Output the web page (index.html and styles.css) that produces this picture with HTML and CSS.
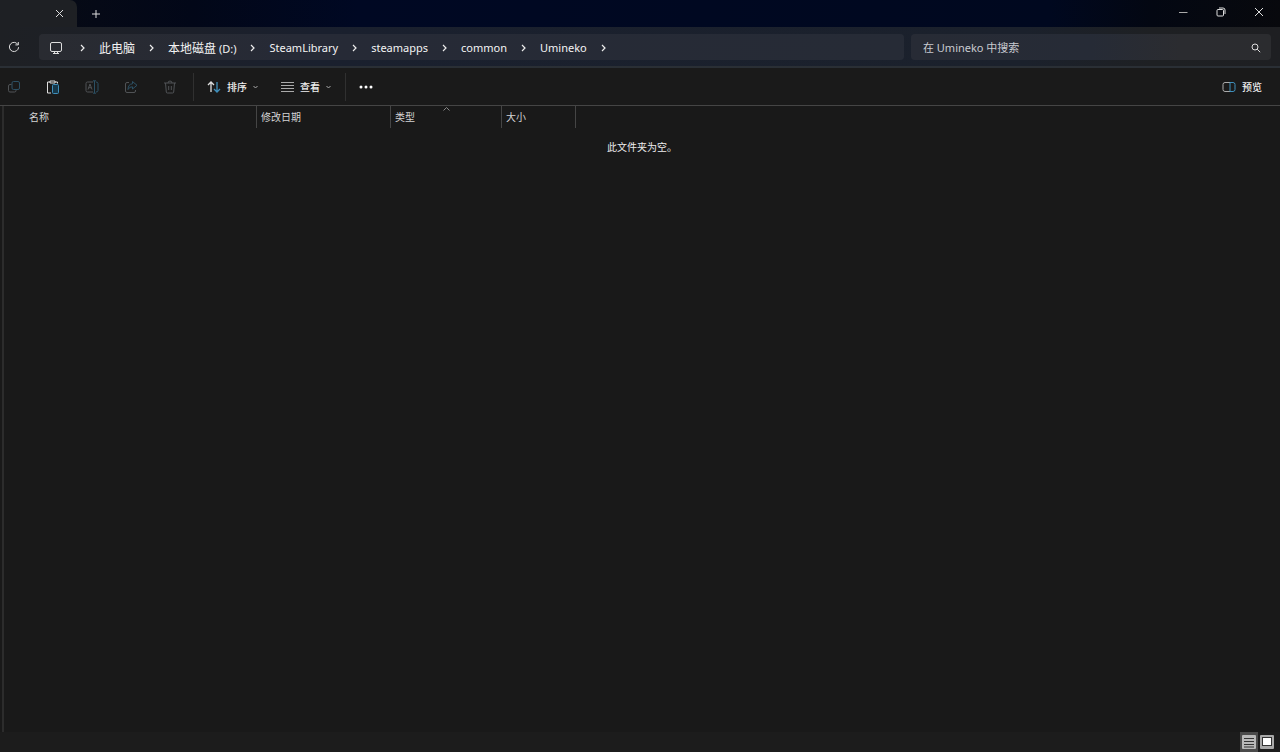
FILE: index.html
```html
<!DOCTYPE html>
<html lang="zh-CN">
<head>
<meta charset="utf-8">
<meta name="viewport" content="width=device-width, initial-scale=1">
<title>Umineko</title>
<link rel="stylesheet" href="styles.css">
</head>
<body>
<div class="window">
  <header class="titlebar">
    <div class="tab">
      <button class="btn" type="button" aria-label="关闭标签页"><svg class="icon" width="9" height="9" viewBox="0 0 9 9"><path d="M1 1l7 7M8 1l-7 7"/></svg></button>
    </div>
    <button class="btn new-tab" type="button" aria-label="新建标签页"><svg class="icon" width="10" height="10" viewBox="0 0 10 10"><path d="M5 1v8M1 5h8"/></svg></button>
    <div class="caption">
      <button class="btn caption-btn" type="button" aria-label="最小化"><svg class="icon dim" width="10" height="10" viewBox="0 0 10 10"><path d="M1 5.500h8.500"/></svg></button>
      <button class="btn caption-btn" type="button" aria-label="还原"><svg class="icon" width="10" height="10" viewBox="0 0 10 10"><rect x="1" y="2.500" width="6.500" height="6.500" rx="1"/><path d="M3 1h4a2 2 0 0 1 2 2v4"/></svg></button>
      <button class="btn caption-btn" type="button" aria-label="关闭"><svg class="icon" width="10" height="10" viewBox="0 0 10 10"><path d="M1 1l8 8M9 1L1 9"/></svg></button>
    </div>
  </header>

  <div class="address-row">
    <button class="btn refresh" type="button" aria-label="刷新"><svg class="icon" width="12" height="12" viewBox="0 0 12 12"><path d="M9.900 3.500A4.600 4.600 0 1 0 10.600 6.200M10.300 1v2.900H7.400"/></svg></button>
    <nav class="path" aria-label="地址">
      <svg class="icon monitor" width="14" height="14" viewBox="0 0 14 14"><rect x="1.500" y="1.500" width="11" height="9" rx="1.500"/><path d="M5.500 10.500v2M8.500 10.500v2M4 12.500h6"/></svg>
      <svg class="chev" viewBox="0 0 33 10"><path d="M15 2l3 3-3 3"/></svg>
      <a href="#" class="zh">此电脑</a>
      <svg class="chev" viewBox="0 0 33 10"><path d="M15 2l3 3-3 3"/></svg>
      <a href="#"><span class="zh">本地磁盘</span> (D:)</a>
      <svg class="chev" viewBox="0 0 33 10"><path d="M15 2l3 3-3 3"/></svg>
      <a href="#">SteamLibrary</a>
      <svg class="chev" viewBox="0 0 33 10"><path d="M15 2l3 3-3 3"/></svg>
      <a href="#">steamapps</a>
      <svg class="chev" viewBox="0 0 33 10"><path d="M15 2l3 3-3 3"/></svg>
      <a href="#">common</a>
      <svg class="chev" viewBox="0 0 33 10"><path d="M15 2l3 3-3 3"/></svg>
      <a href="#">Umineko</a>
      <svg class="chev" viewBox="0 0 33 10"><path d="M15 2l3 3-3 3"/></svg>
    </nav>
    <form class="search">
      <input class="search-input" type="text" aria-label="搜索" placeholder="在 Umineko 中搜索">
      <button class="btn" type="button" aria-label="开始搜索"><svg class="icon" width="10" height="10" viewBox="0 0 10 10"><circle cx="4" cy="4" r="3"/><path d="M6.200 6.200L9.200 9.200"/></svg></button>
    </form>
  </div>

  <div class="toolbar">
    <div class="tools">
      <button class="btn" type="button" aria-label="复制" disabled><svg class="icon off" width="14" height="14" viewBox="0 0 14 14"><rect class="off-blue" x="5" y="1.500" width="7.500" height="8" rx="1.500"/><path d="M4.500 4.500H3A1.500 1.500 0 0 0 1.500 6v4.500A1.500 1.500 0 0 0 3 12h4.500A1.500 1.500 0 0 0 9 10.500V10"/></svg></button>
      <button class="btn" type="button" aria-label="粘贴"><svg class="icon paste" width="14" height="14" viewBox="0 0 14 14"><path d="M4 2H1.500v11H5M9 2h2.500v1.500M4 1h5v2H4z"/><rect class="blue" x="6.500" y="4.500" width="6" height="9" rx="1"/></svg></button>
      <button class="btn" type="button" aria-label="重命名" disabled><svg class="icon off" width="14" height="14" viewBox="0 0 14 14"><path d="M8 2H2.500Q1 2 1 3.500v7Q1 12 2.500 12H8M3 9.500l2-5.500 2 5.500M3.700 7.700h2.600"/><path class="off-blue" d="M9.500 1v12M8 .8h3M8 13.200h3M11 2q2 0 2 1.500v7Q13 12 11 12"/></svg></button>
      <button class="btn" type="button" aria-label="共享" disabled><svg class="icon off" width="14" height="14" viewBox="0 0 14 14"><path d="M5 2.500H3A1.500 1.500 0 0 0 1.500 4v7A1.500 1.500 0 0 0 3 12.500h7a1.500 1.500 0 0 0 1.500-1.500v-1"/><path class="off-blue" d="M8.500 1.500L13 5.300 8.500 9V6.800Q5.500 6.500 4 9.500 4.200 4 8.500 3.800z"/></svg></button>
      <button class="btn" type="button" aria-label="删除" disabled><svg class="icon off" width="14" height="14" viewBox="0 0 14 14"><path d="M1 3h12M5 3a2 2 0 0 1 4 0M2.500 3l.8 9q.1 1 1 1h5.400q.9 0 1-1l.8-9M5.700 6v4M8.300 6v4"/></svg></button>
    </div>
    <div class="menus">
      <button class="btn menu-btn" type="button"><svg class="icon sort-icon" width="14" height="12" viewBox="0 0 14 12"><path d="M4 11V1M1 4l3-3 3 3"/><path class="blue" d="M10 1v10M7 8l3 3 3-3"/></svg><span>排序</span><svg class="icon dim" width="5" height="4" viewBox="0 0 5 4"><path d="M.5 1l2 2 2-2"/></svg></button>
      <button class="btn menu-btn" type="button"><svg class="icon dim" width="13" height="10" viewBox="0 0 13 10"><path d="M0 .5h13M0 3.500h13M0 6.500h13M0 9.500h13"/></svg><span>查看</span><svg class="icon dim" width="5" height="4" viewBox="0 0 5 4"><path d="M.5 1l2 2 2-2"/></svg></button>
    </div>
    <button class="btn more" type="button" aria-label="更多"><svg width="14" height="4" viewBox="0 0 14 4" fill="#fff"><circle cx="2" cy="2" r="1.500"/><circle cx="7" cy="2" r="1.500"/><circle cx="12" cy="2" r="1.500"/></svg></button>
    <button class="btn menu-btn preview" type="button"><svg class="icon" width="14" height="12" viewBox="0 0 14 12"><path class="dim" d="M8 1.500H3A2 2 0 0 0 1 3.500v5a2 2 0 0 0 2 2h5"/><path class="blue" d="M8 1.500h3a2 2 0 0 1 2 2v5a2 2 0 0 1-2 2H8z"/></svg><span>预览</span></button>
  </div>

  <main class="files">
    <table class="columns">
      <thead>
        <tr>
          <th class="col-name" scope="col">名称</th>
          <th class="col-date" scope="col">修改日期</th>
          <th class="col-type" scope="col" aria-sort="ascending">类型<svg class="sort" width="7" height="4" viewBox="0 0 7 4"><path d="M.5 3.500l3-3 3 3"/></svg></th>
          <th class="col-size" scope="col">大小</th>
        </tr>
      </thead>
    </table>
    <p class="empty">此文件夹为空。</p>
  </main>

  <footer class="status">
    <button class="btn view active" type="button" aria-label="详细信息"><svg width="14" height="14" viewBox="0 0 14 14"><rect width="14" height="14" rx="1" fill="#b8b8b8"/><path d="M2 3.500h10M2 6.500h10M2 9.500h10M2 12h10" stroke="#333"/></svg></button>
    <button class="btn view" type="button" aria-label="大缩略图"><svg width="14" height="14" viewBox="0 0 14 14"><rect width="14" height="14" rx="1" fill="#a8a8a8"/><rect x="2.500" y="2.500" width="9" height="8" fill="#fff" stroke="#333"/></svg></button>
  </footer>
</div>
</body>
</html>
```
FILE: styles.css
```css
* { box-sizing: border-box; }

body {
  margin: 0;
  background: #191919;
  color: #f0f0f0;
  font: 11px/16px "Noto Sans", "Noto Sans CJK SC", sans-serif;
}

.window {
  min-height: 100vh;
  display: flex;
  flex-direction: column;
}

.btn {
  display: flex;
  align-items: center;
  justify-content: center;
  padding: 0;
  border: 0;
  background: none;
  color: inherit;
  font: inherit;
}

.icon { fill: none; stroke: #dedede; flex: none; }
.dim { stroke: #aaa; }
.blue { stroke: #3f8fbb; }
.off { stroke: #505356; }
.off-blue { stroke: #2c5064; }
.paste .blue { fill: #17384a; }
.sort-icon { stroke-width: 1.3; }

.titlebar {
  height: 27px;
  display: flex;
  align-items: stretch;
  background: linear-gradient(90deg, #080b14 0%, #020718 15%, #000823 28%, #00081f 82%, #030712 90%, #08090d 100%);
}

.tab {
  width: 77px;
  padding-right: 13px;
  display: flex;
  justify-content: flex-end;
  border-radius: 0 7px 0 0;
  background: #1e2024;
}

.new-tab { width: 37px; }
.caption { margin-left: auto; display: flex; padding-right: 2px; }
.caption-btn { width: 38px; padding-bottom: 3px; }

.address-row {
  display: grid;
  grid-template-columns: 39px minmax(0, 867fr) minmax(0, 358fr);
  align-items: center;
  padding: 7px 9px 6px 0;
  border-bottom: 2px solid #2a2f35;
  background: linear-gradient(90deg, #1e2024 0%, #1c202a 15%, #1a202e 25%, #1b212c 80%, #1e2023 90%, #1e1f22 100%);
}

.refresh { padding-right: 11px; }

.path {
  height: 26px;
  display: flex;
  align-items: center;
  margin-right: 7px;
  padding: 2px 0 0 10px;
  border-radius: 4px;
  background: linear-gradient(90deg, #292b31, #262a36 30%, #262b36);
}

.monitor { margin-right: 3px; }
.path a { color: #f4f4f4; text-decoration: none; white-space: nowrap; }
.zh { font-family: "Noto Sans CJK SC", sans-serif; font-size: 12px; }
.chev { width: 33px; height: 10px; flex: none; fill: none; stroke: #eee; stroke-width: 1.2; }

.search {
  height: 26px;
  display: flex;
  align-items: center;
  padding: 2px 10px 0 12px;
  border-radius: 4px;
  background: linear-gradient(90deg, #272b35, #262b36 50%, #2b2c30 75%, #2b2c2f);
}

.search-input {
  flex: 1;
  min-width: 0;
  padding: 0;
  border: 0;
  outline: 0;
  background: none;
  color: #ddd;
  font: inherit;
}

.search-input::placeholder { color: #c8cad0; }

.toolbar {
  height: 38px;
  display: flex;
  align-items: center;
  border-bottom: 1px solid #454545;
  background: #1a1a1a;
}

.tools {
  display: flex;
  gap: 25px;
  padding: 0 16px 0 7px;
}

.menus {
  display: flex;
  gap: 23px;
  padding: 6px 14px 6px 13px;
  border: 1px solid #303030;
  border-width: 0 1px;
}

.menu-btn { gap: 6px; font-size: 10px; font-weight: 500; }
.menus .menu-btn { min-width: 50px; }
.more { margin-left: 13px; }
.preview { margin: 0 18px 0 auto; }

.files {
  flex: 1;
  margin-left: 2px;
  border-left: 2px solid #2c2c2c;
}

.columns {
  width: 572px;
  table-layout: fixed;
  border-collapse: separate;
  border-spacing: 0;
}

.columns th {
  position: relative;
  height: 22px;
  padding: 0 0 0 4px;
  border-right: 1px solid #454545;
  color: #d4d4d4;
  font-size: 10px;
  font-weight: 400;
  text-align: left;
}

.columns .col-name { width: 253px; padding-left: 25px; }
.col-date { width: 134px; }
.col-type { width: 111px; }
.col-size { width: 74px; }

.sort {
  position: absolute;
  top: 1px;
  left: calc(50% - 3px);
  fill: none;
  stroke: #888;
}

.empty {
  margin: 11px 0 0;
  color: #eee;
  font-size: 10px;
  text-align: center;
}

.status {
  height: 20px;
  display: flex;
  justify-content: flex-end;
  padding-right: 4px;
  background: #1c1c1c;
}

.view { width: 18px; }
.active { background: #4a4a4a; }
```
